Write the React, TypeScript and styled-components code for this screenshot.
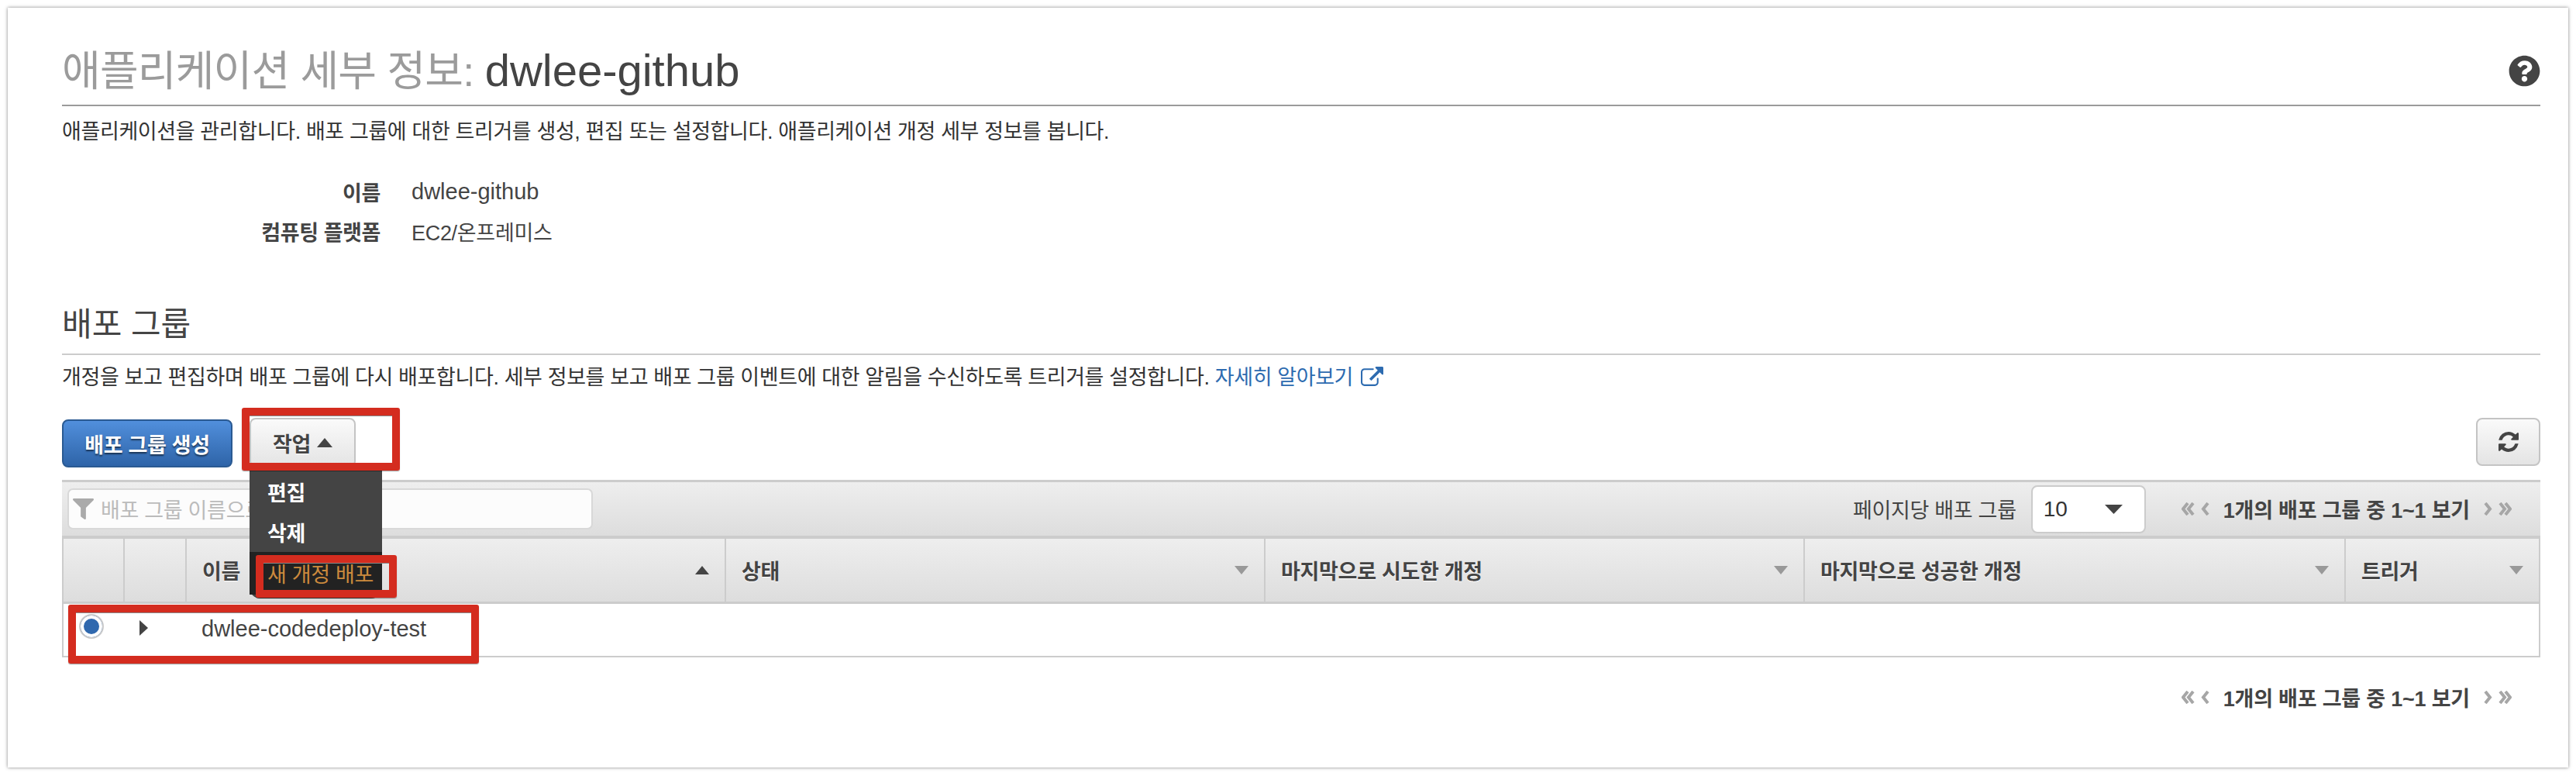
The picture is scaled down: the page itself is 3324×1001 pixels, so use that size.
import React from "react";
import styled, { createGlobalStyle } from "styled-components";
import { FaFilter, FaQuestionCircle } from "react-icons/fa";

const GlobalStyle = createGlobalStyle`
  * {
    box-sizing: border-box;
  }
  body {
    margin: 0;
    background: #fff;
    color: #444;
    font-family: "Liberation Sans", "Noto Sans CJK KR", sans-serif;
  }
`;

const COLUMNS = "79px 80px 696px 696px 696px 698px 1fr";
const RED = "#d42c1f";

const Page = styled.div`
  width: 3324px;
  height: 1001px;
  padding: 10px 10px 11px;
`;

const Card = styled.main`
  height: 980px;
  padding: 0 36px 0 70px;
  background: #fff;
  box-shadow: 0 0 4px rgba(0, 0, 0, 0.5);
`;

const Header = styled.header`
  display: flex;
  align-items: center;
  justify-content: space-between;
  padding: 57px 0 19px;
  border-bottom: 2px solid #9b9b9b;
`;

const Title = styled.h1`
  margin: 0;
  font-size: 54px;
  line-height: 48px;
  font-weight: 400;
  letter-spacing: -0.8px;
  color: #9b9b9b;
`;

const TitleName = styled.span`
  font-size: 58px;
  letter-spacing: 0;
  color: #444;
`;

const HelpIcon = styled(FaQuestionCircle)`
  width: 41px;
  height: 41px;
  color: #444;
`;

const Description = styled.p<{ $top: number }>`
  margin: ${(p) => p.$top}px 0 0;
  font-size: 27px;
  line-height: 34px;
  color: #333;
  letter-spacing: -0.38px;
`;

const DocLink = styled.a`
  color: #2d6bb0;
  text-decoration: none;
`;

const DocLinkIcon = styled.svg`
  width: 29px;
  height: 25px;
  margin-left: 10px;
  vertical-align: -2px;
  fill: #2d6bb0;
`;

const Details = styled.dl`
  display: grid;
  grid-template-columns: 411px 1fr;
  column-gap: 40px;
  grid-auto-rows: 51px;
  align-items: center;
  margin: 35px 0 0;
  font-size: 27px;
  letter-spacing: -0.4px;
`;

const DetailLabel = styled.dt`
  font-weight: 700;
  text-align: right;
`;

const DetailValue = styled.dd<{ $latin?: boolean }>`
  margin: 0;
  font-size: ${(p) => (p.$latin ? 29 : 27)}px;
  letter-spacing: ${(p) => (p.$latin ? 0 : -0.3)}px;
`;

const SectionTitle = styled.h2`
  margin: 70px 0 0;
  padding-bottom: 12px;
  border-bottom: 2px solid #ccc;
  font-size: 42px;
  line-height: 50px;
  font-weight: 400;
  color: #444;
`;

const ActionBar = styled.div`
  display: flex;
  align-items: flex-start;
  gap: 22px;
  margin-top: 35px;
`;

const PrimaryButton = styled.button`
  width: 220px;
  height: 62px;
  margin-top: 2px;
  padding: 0;
  border: 2px solid #2a5a92;
  border-radius: 8px;
  background: linear-gradient(#518fdc, #2e64a8);
  color: #fff;
  font: 700 27px "Liberation Sans", "Noto Sans CJK KR", sans-serif;
  letter-spacing: -0.3px;
  text-shadow: 0 2px 2px rgba(0, 0, 0, 0.55);
`;

const ActionsWrap = styled.div`
  position: relative;
`;

const GreyButton = styled.button<{ $width: number; $height: number }>`
  display: flex;
  align-items: center;
  justify-content: center;
  gap: 8px;
  width: ${(p) => p.$width}px;
  height: ${(p) => p.$height}px;
  padding: 0;
  border: 2px solid #c4c4c4;
  border-radius: 8px;
  background: linear-gradient(#fafafa, #e4e4e4);
  color: #444;
  font: 700 27px "Liberation Sans", "Noto Sans CJK KR", sans-serif;
  letter-spacing: -0.3px;
  text-shadow: 0 1px 1px #fff;
`;

const RefreshButton = styled(GreyButton)`
  margin-left: auto;
`;

const RefreshIcon = styled.svg`
  width: 26px;
  height: 26px;
  fill: #444;
`;

const Highlight = styled.div<{ $x: number; $y: number; $w: number; $h: number }>`
  position: absolute;
  z-index: 3;
  left: ${(p) => p.$x}px;
  top: ${(p) => p.$y}px;
  width: ${(p) => p.$w}px;
  height: ${(p) => p.$h}px;
  border: 10px solid ${RED};
  border-radius: 3px;
  box-shadow: 0 1px 1px rgba(0, 0, 0, 0.4), inset 0 1px 0 #888;
`;

const Menu = styled.ul`
  position: absolute;
  z-index: 2;
  left: 0;
  top: 68px;
  width: 171px;
  height: 165px;
  margin: 0;
  padding: 1px 0 0;
  list-style: none;
  background: #444;
  border-radius: 0 0 14px 14px;
`;

const MenuItem = styled.li<{ $active?: boolean }>`
  display: flex;
  align-items: center;
  height: ${(p) => (p.$active ? 55 : 52)}px;
  padding-left: 23px;
  background: ${(p) => (p.$active ? "#222" : "transparent")};
  color: ${(p) => (p.$active ? "#cc8a3d" : "#fff")};
  font-size: 27px;
  font-weight: ${(p) => (p.$active ? 400 : 700)};
  letter-spacing: -0.3px;
  white-space: nowrap;
`;

const Table = styled.section`
  position: relative;
  margin-top: 16px;
`;

const Toolbar = styled.div`
  display: flex;
  align-items: center;
  height: 76px;
  padding: 0 37px 0 7px;
  border-top: 3px solid #ccc;
  border-bottom: 4px solid #ccc;
  background: linear-gradient(#eee, #ddd);
`;

const FilterBox = styled.div`
  display: flex;
  align-items: center;
  gap: 9px;
  width: 678px;
  height: 53px;
  padding-left: 5px;
  border: 2px solid #d8d8d8;
  border-radius: 7px;
  background: #fcfcfc;
  color: #bbb;
  font-size: 27px;
  letter-spacing: -0.3px;
`;

const FilterIcon = styled(FaFilter)`
  width: 27px;
  height: 27px;
  color: #aaa;
`;

const PageSizeLabel = styled.span`
  margin-left: auto;
  font-size: 27px;
  letter-spacing: -0.3px;
  color: #444;
`;

const PageSizeSelect = styled.div`
  display: flex;
  align-items: center;
  justify-content: space-between;
  width: 148px;
  height: 62px;
  margin: 0 46px 0 19px;
  padding: 0 28px 0 14px;
  border: 2px solid #ccc;
  border-radius: 8px;
  background: #fff;
  color: #333;
  font-size: 28px;
`;

const Triangle = styled.svg<{ $color: string; $w: number; $h: number }>`
  flex: none;
  width: ${(p) => p.$w}px;
  height: ${(p) => p.$h}px;
  fill: ${(p) => p.$color};
`;

const Pager = styled.div`
  display: flex;
  align-items: center;
  gap: 8px;
  font-size: 27px;
  font-weight: 700;
  letter-spacing: -0.2px;
  color: #444;
`;

const PagerArrow = styled.svg<{ $w: number }>`
  flex: none;
  width: ${(p) => p.$w}px;
  height: 17px;
  fill: none;
  stroke: #a6a6a6;
  stroke-width: 4;
`;

const PagerText = styled.span`
  margin: 0 10px;
`;

const HeaderRow = styled.div`
  display: grid;
  grid-template-columns: ${COLUMNS};
  height: 84px;
  border: solid #ccc;
  border-width: 0 2px 3px;
  background: linear-gradient(#eee, #ddd);
`;

const HeaderCell = styled.div`
  display: flex;
  align-items: center;
  justify-content: space-between;
  padding: 0 20px;
  border-right: 2px solid #ccc;
  font-size: 27px;
  font-weight: 700;
  letter-spacing: -0.3px;
  color: #444;
  text-shadow: 0 1px 1px #fff;
  &:last-child {
    border-right: 0;
  }
`;

const BodyRow = styled.div`
  position: relative;
  display: grid;
  grid-template-columns: ${COLUMNS};
  height: 69px;
  border: solid #ccc;
  border-width: 0 2px 2px;
  background: #fff;
`;

const RadioCell = styled.div`
  padding: 13px 0 0 20px;
`;

const Radio = styled.span`
  display: block;
  width: 32px;
  height: 32px;
  border: 2px solid #ccc;
  border-radius: 50%;
  background: #2f68ae;
  box-shadow: inset 0 0 0 4px #fff;
`;

const ExpandCell = styled.div`
  padding: 21px 0 0 19px;
`;

const NameCell = styled.div`
  padding: 17px 0 0 19px;
  font-size: 29px;
  line-height: 30px;
  color: #444;
  white-space: nowrap;
`;

const Footer = styled.footer`
  display: flex;
  justify-content: flex-end;
  padding: 32px 37px 0 0;
`;

function PagerBlock(): React.JSX.Element {
  return (
    <Pager>
      <PagerArrow viewBox="0 0 17 17" $w={17}>
        <polyline points="8,1 2,8.5 8,16" />
        <polyline points="15,1 9,8.5 15,16" />
      </PagerArrow>
      <PagerArrow viewBox="0 0 11 17" $w={11}>
        <polyline points="9,1 3,8.5 9,16" />
      </PagerArrow>
      <PagerText>1개의 배포 그룹 중 1~1 보기</PagerText>
      <PagerArrow viewBox="0 0 11 17" $w={11}>
        <polyline points="2,1 8,8.5 2,16" />
      </PagerArrow>
      <PagerArrow viewBox="0 0 17 17" $w={17}>
        <polyline points="2,1 8,8.5 2,16" />
        <polyline points="9,1 15,8.5 9,16" />
      </PagerArrow>
    </Pager>
  );
}

const SORT_DOWN = (
  <Triangle viewBox="0 0 18 11" $color="#999" $w={18} $h={11}>
    <polygon points="0,0 18,0 9,11" />
  </Triangle>
);

const HEADERS = ["상태", "마지막으로 시도한 개정", "마지막으로 성공한 개정", "트리거"];

export default function App(): React.JSX.Element {
  return (
    <Page>
      <GlobalStyle />
      <Card>
        <Header>
          <Title>
            애플리케이션 세부 정보: <TitleName>dwlee-github</TitleName>
          </Title>
          <HelpIcon />
        </Header>
        <Description $top={16}>
          애플리케이션을 관리합니다. 배포 그룹에 대한 트리거를 생성, 편집 또는 설정합니다. 애플리케이션 개정 세부 정보를 봅니다.
        </Description>
        <Details>
          <DetailLabel>이름</DetailLabel>
          <DetailValue $latin>dwlee-github</DetailValue>
          <DetailLabel>컴퓨팅 플랫폼</DetailLabel>
          <DetailValue>EC2/온프레미스</DetailValue>
        </Details>

        <SectionTitle>배포 그룹</SectionTitle>
        <Description $top={12}>
          개정을 보고 편집하며 배포 그룹에 다시 배포합니다. 세부 정보를 보고 배포 그룹 이벤트에 대한 알림을 수신하도록 트리거를 설정합니다.{" "}
          <DocLink href="#">
            자세히 알아보기
            <DocLinkIcon viewBox="0 0 1792 1536">
              <path d="M1408 928v320q0 119-84.5 203.5t-203.5 84.5h-832q-119 0-203.5-84.5t-84.5-203.5v-832q0-119 84.5-203.5t203.5-84.5h704q14 0 23 9t9 23v64q0 14-9 23t-23 9h-704q-66 0-113 47t-47 113v832q0 66 47 113t113 47h832q66 0 113-47t47-113v-320q0-14 9-23t23-9h64q14 0 23 9t9 23zm384-864v512q0 26-19 45t-45 19-45-19l-176-176-652 652q-10 10-23 10t-23-10l-114-114q-10-10-10-23t10-23l652-652-176-176q-19-19-19-45t19-45 45-19h512q26 0 45 19t19 45z" />
            </DocLinkIcon>
          </DocLink>
        </Description>

        <ActionBar>
          <PrimaryButton>배포 그룹 생성</PrimaryButton>
          <ActionsWrap>
            <GreyButton $width={137} $height={64}>
              작업
              <Triangle viewBox="0 0 20 12" $color="#444" $w={20} $h={12}>
                <polygon points="10,0 20,12 0,12" />
              </Triangle>
            </GreyButton>
            <Highlight $x={-10} $y={-13} $w={204} $h={81} />
            <Menu>
              <MenuItem>편집</MenuItem>
              <MenuItem>삭제</MenuItem>
              <MenuItem $active>새 개정 배포</MenuItem>
              <Highlight $x={8} $y={109} $w={182} $h={55} />
            </Menu>
          </ActionsWrap>
          <RefreshButton $width={83} $height={62}>
            <RefreshIcon viewBox="0 0 1536 1536">
              <path d="M1511 928q0 5-1 7-64 268-268 434.5t-478 166.5q-146 0-282.5-55t-243.5-157l-129 129q-19 19-45 19t-45-19-19-45v-448q0-26 19-45t45-19h448q26 0 45 19t19 45-19 45l-137 137q71 66 161 102t187 36q134 0 250-65t186-179q11-17 53-117 8-23 30-23h192q13 0 22.5 9.5t9.5 22.5zm25-800v448q0 26-19 45t-45 19h-448q-26 0-45-19t-19-45 19-45l138-138q-148-137-349-137-134 0-250 65t-186 179q-11 17-53 117-8 23-30 23h-199q-13 0-22.5-9.5t-9.5-22.5v-7q65-268 270-434.5t480-166.5q146 0 284 55.5t245 156.5l130-129q19-19 45-19t45 19 19 45z" />
            </RefreshIcon>
          </RefreshButton>
        </ActionBar>

        <Table>
          <Toolbar>
            <FilterBox>
              <FilterIcon />
              배포 그룹 이름으로 필터링
            </FilterBox>
            <PageSizeLabel>페이지당 배포 그룹</PageSizeLabel>
            <PageSizeSelect>
              10
              <Triangle viewBox="0 0 23 12" $color="#444" $w={23} $h={12}>
                <polygon points="0,0 23,0 11.5,12" />
              </Triangle>
            </PageSizeSelect>
            <PagerBlock />
          </Toolbar>
          <HeaderRow>
            <HeaderCell />
            <HeaderCell />
            <HeaderCell>
              이름
              <Triangle viewBox="0 0 18 11" $color="#444" $w={18} $h={11}>
                <polygon points="9,0 18,11 0,11" />
              </Triangle>
            </HeaderCell>
            {HEADERS.map((label) => (
              <HeaderCell key={label}>
                {label}
                {SORT_DOWN}
              </HeaderCell>
            ))}
          </HeaderRow>
          <BodyRow>
            <RadioCell>
              <Radio />
            </RadioCell>
            <ExpandCell>
              <Triangle viewBox="0 0 11 20" $color="#444" $w={11} $h={20}>
                <polygon points="0,0 11,10 0,20" />
              </Triangle>
            </ExpandCell>
            <NameCell>dwlee-codedeploy-test</NameCell>
            <Highlight $x={6} $y={1} $w={530} $h={76} />
          </BodyRow>
        </Table>

        <Footer>
          <PagerBlock />
        </Footer>
      </Card>
    </Page>
  );
}
